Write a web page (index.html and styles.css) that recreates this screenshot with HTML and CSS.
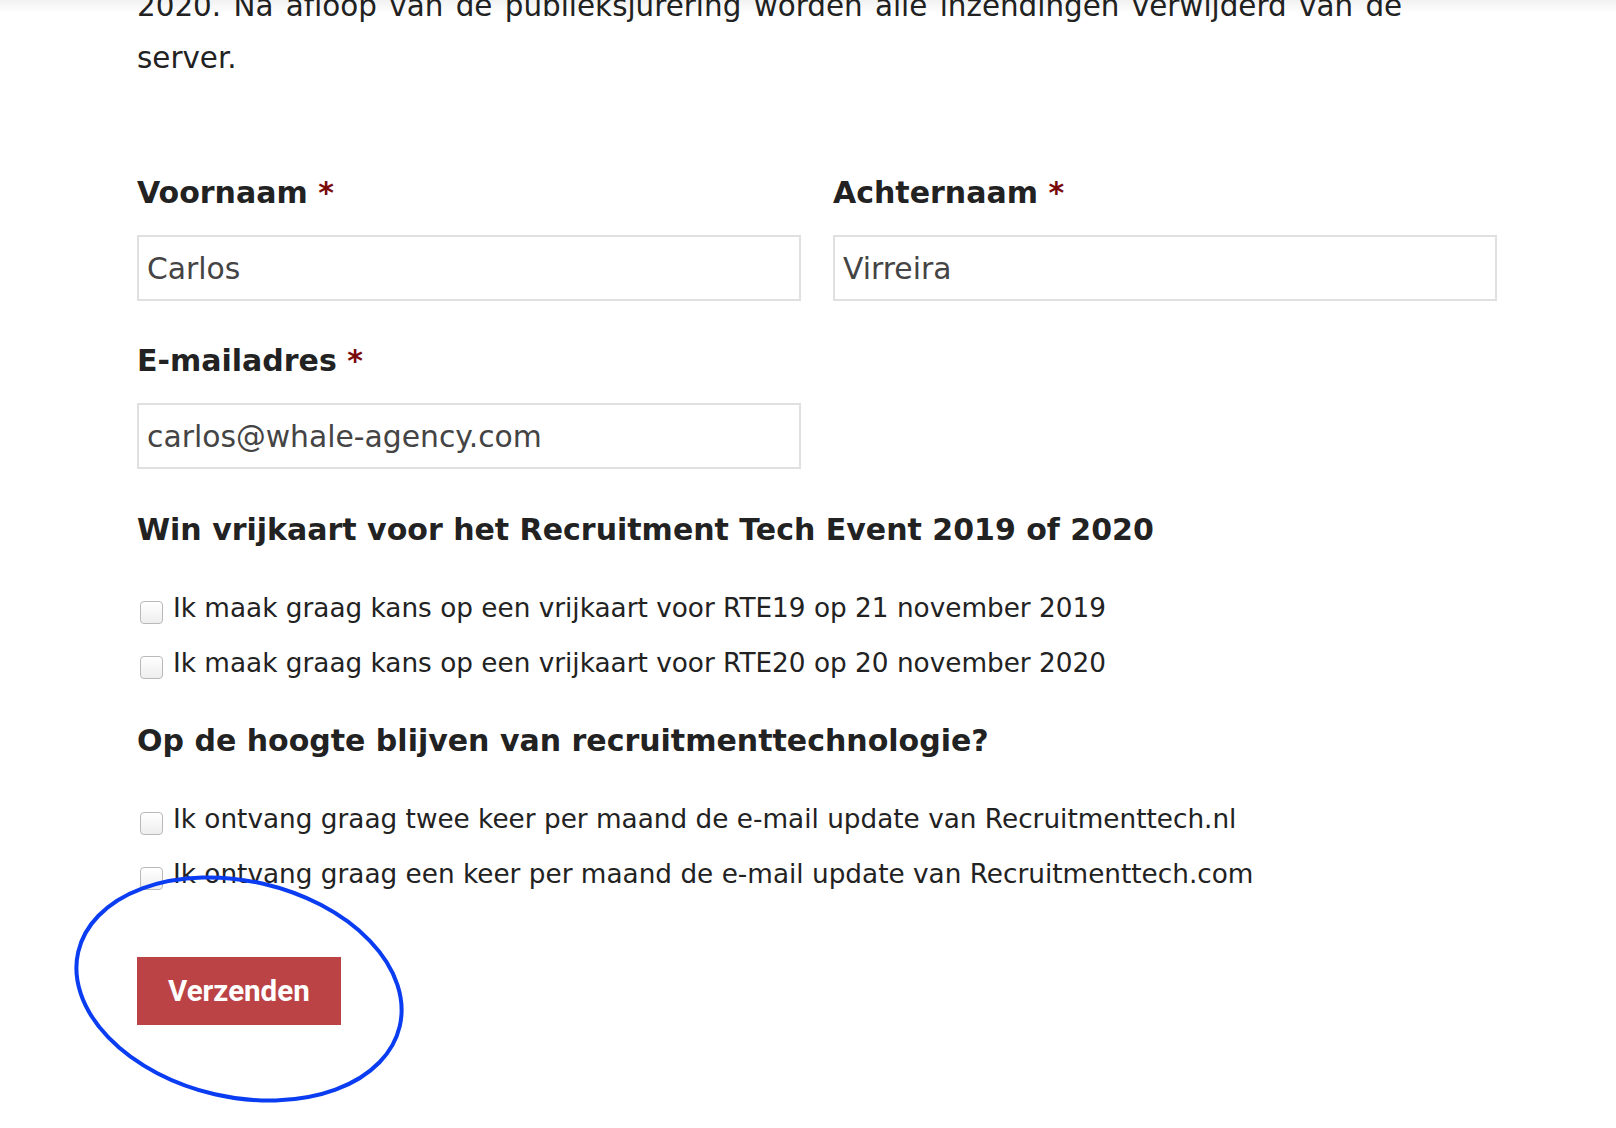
FILE: index.html
```html
<!DOCTYPE html>
<html lang="nl">
<head>
<meta charset="utf-8">
<title>Inzending</title>
<link rel="stylesheet" href="styles.css">
</head>
<body>
<div class="top-shade"></div>
<main class="page">
  <p class="intro">2020. Na afloop van de publieksjurering worden alle inzendingen verwijderd van de<br>server.</p>

  <form class="form">
    <div class="row-2">
      <div class="field">
        <label class="label">Voornaam <span class="req">*</span></label>
        <input class="text-input" type="text" value="Carlos">
      </div>
      <div class="field">
        <label class="label">Achternaam <span class="req">*</span></label>
        <input class="text-input" type="text" value="Virreira">
      </div>
    </div>
    <div class="row-2">
      <div class="field">
        <label class="label">E-mailadres <span class="req">*</span></label>
        <input class="text-input" type="email" value="carlos@whale-agency.com">
      </div>
    </div>

    <h3 class="group-title">Win vrijkaart voor het Recruitment Tech Event 2019 of 2020</h3>
    <div class="checks">
      <label class="check"><input type="checkbox" class="box"><span>Ik maak graag kans op een vrijkaart voor RTE19 op 21 november 2019</span></label>
      <label class="check"><input type="checkbox" class="box"><span>Ik maak graag kans op een vrijkaart voor RTE20 op 20 november 2020</span></label>
    </div>

    <h3 class="group-title">Op de hoogte blijven van recruitmenttechnologie?</h3>
    <div class="checks checks-last">
      <label class="check"><input type="checkbox" class="box"><span>Ik ontvang graag twee keer per maand de e-mail update van Recruitmenttech.nl</span></label>
      <label class="check"><input type="checkbox" class="box"><span>Ik ontvang graag een keer per maand de e-mail update van Recruitmenttech.com</span></label>
    </div>

    <div class="submit-wrap">
      <button type="button" class="submit">Verzenden</button>
      <svg class="annotation" width="350" height="250" viewBox="0 0 350 250" aria-hidden="true">
        <ellipse cx="172" cy="127" rx="165" ry="108" transform="rotate(13 172 127)" fill="none" stroke="#0a3cf2" stroke-width="4"/>
      </svg>
    </div>
  </form>
</main>
</body>
</html>
```

FILE: styles.css
```css
html, body {
  margin: 0;
  padding: 0;
  background: #fff;
}

body {
  font-family: "DejaVu Sans", Verdana, sans-serif;
  color: #222;
  min-height: 1128px;
}

.top-shade {
  position: fixed;
  top: 0;
  left: 0;
  right: 0;
  height: 14px;
  background: linear-gradient(rgba(0, 0, 0, 0.05), rgba(0, 0, 0, 0));
  pointer-events: none;
  z-index: 5;
}

.page {
  width: 1360px;
  padding: 0 0 140px 137px;
}

.intro {
  font-size: 29.4px;
  line-height: 52px;
  word-spacing: 3px;
  margin: -20px 0 0;
  white-space: nowrap;
}

.form {
  margin-top: 89px;
  display: flex;
  flex-direction: column;
}

.row-2 {
  display: grid;
  grid-template-columns: 664px 664px;
  column-gap: 32px;
  margin-bottom: 40px;
}

.field {
  display: flex;
  flex-direction: column;
}

.label {
  font-weight: bold;
  font-size: 30px;
  line-height: 40px;
  margin-bottom: 22px;
}

.req {
  color: #7a0b0b;
}

.text-input {
  box-sizing: border-box;
  height: 66px;
  width: 100%;
  border: 2px solid #e0e0e0;
  border-radius: 0;
  padding: 0 8px;
  margin: 0;
  font-family: "DejaVu Sans", Verdana, sans-serif;
  font-size: 29.8px;
  color: #444;
  background: #fff;
  outline: none;
}

.group-title {
  font-size: 30px;
  line-height: 40px;
  font-weight: bold;
  margin: 1px 0 38px;
}

.checks {
  display: flex;
  flex-direction: column;
  gap: 15px;
  margin-bottom: 37px;
}

.checks-last {
  margin-bottom: 0;
}

.check {
  display: flex;
  align-items: center;
  font-size: 26.3px;
  line-height: 40px;
}

.box {
  appearance: none;
  -webkit-appearance: none;
  box-sizing: border-box;
  width: 23px;
  height: 23px;
  margin: 9px 10px 0 3px;
  border: 1px solid #b9b9b9;
  border-radius: 4px;
  background: linear-gradient(#ffffff, #eeeeee);
  flex: none;
}

.submit-wrap {
  position: relative;
  margin-top: 63px;
  align-self: flex-start;
}

.submit {
  display: block;
  height: 68px;
  padding: 0 31px;
  border: 0;
  border-radius: 0;
  background: #bb4345;
  color: #fff;
  font-family: Roboto, "Liberation Sans", sans-serif;
  font-weight: bold;
  font-size: 29.5px;
  line-height: 68px;
}

.annotation {
  position: absolute;
  left: -70px;
  top: -95px;
  pointer-events: none;
  overflow: visible;
}
```
